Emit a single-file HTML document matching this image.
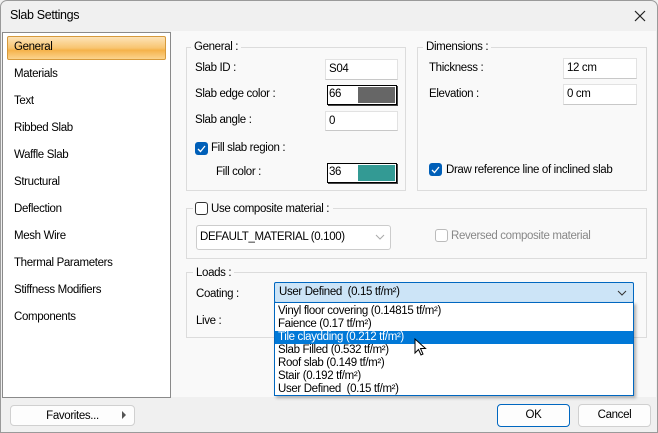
<!DOCTYPE html>
<html><head><style>
*{box-sizing:border-box;margin:0;padding:0}
body{width:658px;height:433px;background:#f0f0f0;font-family:"Liberation Sans",sans-serif;font-size:11.5px;letter-spacing:-0.35px;color:#000;position:relative;overflow:hidden}
.a{position:absolute;white-space:nowrap}
.win{position:absolute;left:0;top:0;width:658px;height:433px;border:1px solid #9a9a9a;border-radius:7px 7px 0 0;background:#f0f0f0}
.grp{position:absolute;border:1px solid #dcdcdc}
.lbl{position:absolute;background:#f9f9f9;padding:0 3px;line-height:14px}
.in{position:absolute;background:#fff;border:1px solid #e2e2e2;border-bottom:1px solid #c8c8c8;padding-left:3px;line-height:18px}
.cb{position:absolute;width:13px;height:13px;border-radius:3px}
.cb.on{background:#005fb8}
.cb.off{border:1px solid #333;background:#fff}
.col{position:absolute;border:1px solid #000;box-shadow:1px 1px 0 #444;background:#fff;height:20px}
.btn{position:absolute;background:#fdfdfd;border:1px solid #d0d0d0;border-radius:4px;text-align:center;line-height:20px}
</style></head><body>
<div class="win"></div>
<div class="a" style="left:10px;top:8px;font-size:12.5px">Slab Settings</div>
<svg class="a" style="left:634px;top:10px" width="12" height="12"><path d="M1 1L11 11M11 1L1 11" stroke="#222" stroke-width="1.2"/></svg>
<div class="a" style="left:2px;top:32px;width:169px;height:366px;background:#fff;border:1px solid #8a8a8a"></div>
<div class="a" style="left:171px;top:31px;width:485px;height:366px;background:#f9f9f9"></div>
<div class="a" style="left:7px;top:36px;width:159px;height:24px;border:1px solid #d69a3c;border-radius:2px;background:linear-gradient(#fde3b8,#f8c571 50%,#f5b24a 60%,#fbd48e)"></div>
<div class="a" style="left:14px;top:41px">General</div>
<div class="a" style="left:14px;top:68px">Materials</div>
<div class="a" style="left:14px;top:95px">Text</div>
<div class="a" style="left:14px;top:122px">Ribbed Slab</div>
<div class="a" style="left:14px;top:149px">Waffle Slab</div>
<div class="a" style="left:14px;top:176px">Structural</div>
<div class="a" style="left:14px;top:203px">Deflection</div>
<div class="a" style="left:14px;top:230px">Mesh Wire</div>
<div class="a" style="left:14px;top:257px">Thermal Parameters</div>
<div class="a" style="left:14px;top:284px">Stiffness Modifiers</div>
<div class="a" style="left:14px;top:311px">Components</div>

<div class="grp" style="left:186px;top:47px;width:220px;height:144px"></div>
<div class="lbl" style="left:191px;top:40px">General :</div>
<div class="a" style="left:195px;top:62px">Slab ID :</div>
<div class="in" style="left:325px;top:59px;width:73px;height:21px">S04</div>
<div class="a" style="left:195px;top:88px">Slab edge color :</div>
<div class="col" style="left:327px;top:85px;width:70px"><span style="position:absolute;left:1px;top:2px">66</span><div style="position:absolute;left:30px;top:1px;width:37px;height:16px;background:#666"></div></div>
<div class="a" style="left:195px;top:114px">Slab angle :</div>
<div class="in" style="left:325px;top:111px;width:73px;height:20px">0</div>
<div class="cb on" style="left:195px;top:142px"></div>
<svg class="a" style="left:195px;top:142px" width="13" height="13"><path d="M3 7l2.5 2.5L10 4" stroke="#fff" fill="none" stroke-width="1.3"/></svg>
<div class="a" style="left:211px;top:142px">Fill slab region :</div>
<div class="a" style="left:216px;top:166px">Fill color :</div>
<div class="col" style="left:327px;top:163px;width:70px"><span style="position:absolute;left:1px;top:2px">36</span><div style="position:absolute;left:30px;top:1px;width:37px;height:16px;background:#339a94"></div></div>

<div class="grp" style="left:417px;top:47px;width:230px;height:144px"></div>
<div class="lbl" style="left:423px;top:40px">Dimensions :</div>
<div class="a" style="left:429px;top:62px">Thickness :</div>
<div class="in" style="left:563px;top:58px;width:74px;height:21px">12 cm</div>
<div class="a" style="left:429px;top:88px">Elevation :</div>
<div class="in" style="left:563px;top:84px;width:74px;height:21px">0 cm</div>
<div class="cb on" style="left:429px;top:163px"></div>
<svg class="a" style="left:429px;top:163px" width="13" height="13"><path d="M3 7l2.5 2.5L10 4" stroke="#fff" fill="none" stroke-width="1.3"/></svg>
<div class="a" style="left:446px;top:164px">Draw reference line of inclined slab</div>

<div class="grp" style="left:186px;top:208px;width:461px;height:51px"></div>
<div class="lbl" style="left:193px;top:201px;width:140px;height:15px"></div>
<div class="cb off" style="left:195px;top:202px"></div>
<div class="a" style="left:211px;top:203px">Use composite material :</div>
<div class="a" style="left:196px;top:225px;width:195px;height:25px;background:#fff;border:1px solid #ccc;border-radius:3px;padding:5px 0 0 3px">DEFAULT_MATERIAL (0.100)</div>
<svg class="a" style="left:375px;top:234px" width="10" height="6"><path d="M1 1l4 4 4-4" stroke="#aaa" fill="none"/></svg>
<div class="cb off" style="left:435px;top:229px;border-color:#bbb"></div>
<div class="a" style="left:451px;top:230px;color:#888">Reversed composite material</div>

<div class="grp" style="left:186px;top:272px;width:461px;height:66px"></div>
<div class="lbl" style="left:193px;top:266px">Loads :</div>
<div class="a" style="left:196px;top:288px">Coating :</div>
<div class="a" style="left:196px;top:315px">Live :</div>
<div class="a" style="left:274px;top:282px;width:360px;height:21px;background:#cce4f7;border:1px solid #0067c0;border-radius:2px;padding:3px 0 0 4px">User Defined&nbsp; (0.15 tf/m²)</div>
<svg class="a" style="left:617px;top:290px" width="10" height="6"><path d="M1 1l4 4 4-4" stroke="#333" fill="none"/></svg>
<div class="a" style="left:274px;top:302px;width:360px;height:94px;background:#fff;border:1px solid #0067c0;box-shadow:2px 2px 3px rgba(0,0,0,.3);font-size:11.5px;line-height:13px;padding-top:2px">
<div style="padding-left:3px">Vinyl floor covering (0.14815 tf/m²)</div>
<div style="padding-left:3px">Faience (0.17 tf/m²)</div>
<div style="padding-left:3px;background:#0078d7;color:#fff">Tile claydding (0.212 tf/m²)</div>
<div style="padding-left:3px">Slab Filled (0.532 tf/m²)</div>
<div style="padding-left:3px">Roof slab (0.149 tf/m²)</div>
<div style="padding-left:3px">Stair (0.192 tf/m²)</div>
<div style="padding-left:3px">User Defined&nbsp; (0.15 tf/m²)</div>
</div>
<svg class="a" style="left:414px;top:338px" width="14" height="19"><path d="M1 1v14l3.5-3.5 2.5 5.5 2-1-2.5-5.5h5z" fill="#fff" stroke="#000"/></svg>

<div class="btn" style="left:10px;top:405px;width:125px;height:21px">Favorites...</div>
<svg class="a" style="left:122px;top:411px" width="5" height="8"><path d="M0 0l4 4-4 4z" fill="#555"/></svg>
<div class="btn" style="left:497px;top:404px;width:73px;height:23px;border:1px solid #0067c0;line-height:21px">OK</div>
<div class="btn" style="left:578px;top:404px;width:73px;height:23px;line-height:21px">Cancel</div>
</body></html>
